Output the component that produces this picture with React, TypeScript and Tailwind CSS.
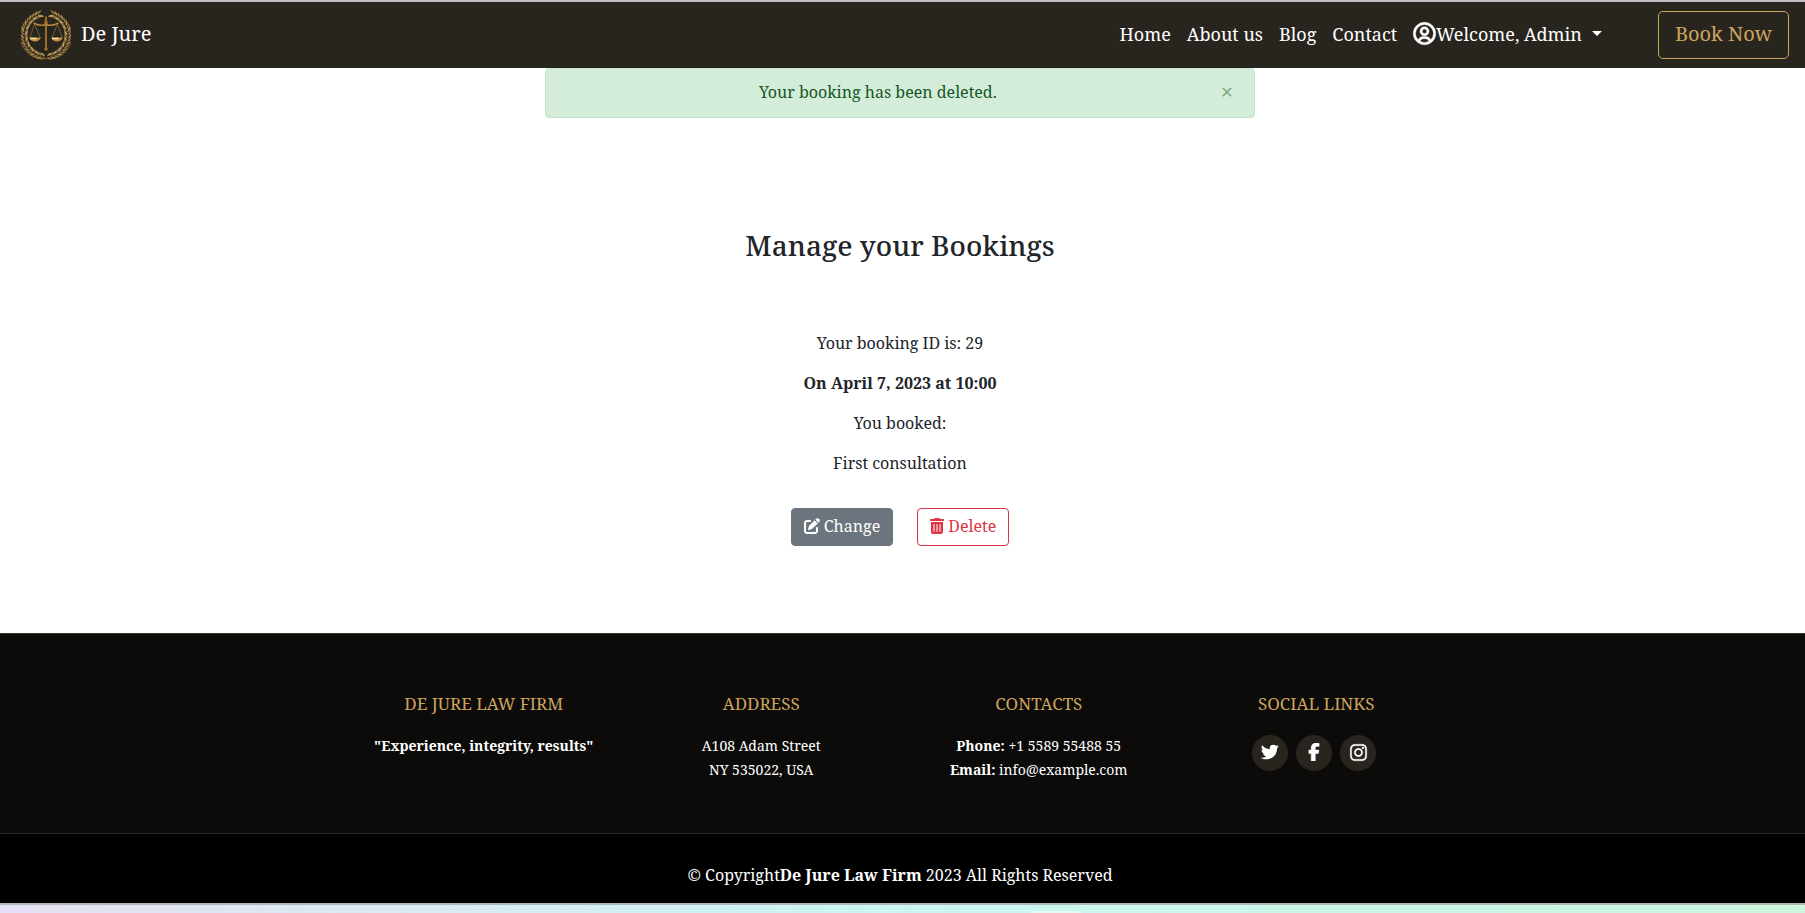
import type { ReactNode } from "react";
import { BiLogoTwitter, BiUserCircle } from "react-icons/bi";
import { FaFacebookF, FaInstagram, FaPenToSquare, FaTrashCan } from "react-icons/fa6";

const leaves = Array.from({ length: 19 }, (_, i) => 4 + i * 8.6);

function Wreath({ flip }: { flip?: boolean }) {
  return (
    <g transform={flip ? "translate(100 0) scale(-1 1)" : undefined}>
      <path d="M52 97 A 44 44 0 0 1 36 7" fill="none" stroke="#7a5f2b" strokeWidth="2" />
      {leaves.map((a, i) => (
        <g key={a} transform={`rotate(${a} 50 50)`}>
          <path d="M51 94 q-6 0 -11 5.500 q8 1.500 11 -5.500z" fill={i % 2 ? "#b39254" : "#94743a"} />
          <path d="M51 93 q-6 0 -11 -6.500 q8 -1.500 11 6.500z" fill={i % 2 ? "#8d6f38" : "#bd9c5c"} />
        </g>
      ))}
    </g>
  );
}

function Logo() {
  return (
    <svg viewBox="0 0 100 100" className="h-[50px] w-[50px]">
      <Wreath />
      <Wreath flip />
      <path d="M48 13 h4 v7 l2 6 -2 3 v46 l2 4 -4 3 -4 -3 2 -4 v-46 l-2 -3 2 -6z" fill="#9c6d22" />
      <path d="M27 27 q12 6 23 2 q11 4 23 -2" fill="none" stroke="#b08438" strokeWidth="2.8" />
      <circle cx="27" cy="27" r="2.2" fill="#b89048" />
      <circle cx="73" cy="27" r="2.2" fill="#b89048" />
      <path d="M27 28 L18 55 M27 28 L38 55 M73 28 L62 55 M73 28 L82 55" fill="none" stroke="#7d6330" strokeWidth="1.7" />
      <path d="M16 55 h24 q-4 8 -12 8 t-12 -8z M60 55 h24 q-4 8 -12 8 t-12 -8z" fill="#c08f3c" />
      <path d="M18 57 h13 M62 57 h13" stroke="#f0dfb0" strokeWidth="2.6" />
    </svg>
  );
}

function FooterColumn({ title, children }: { title: string; children: ReactNode }) {
  return (
    <div className="flex flex-col items-center text-center">
      <h4 className="mb-5 text-[17px] leading-5 text-[#cda45e] uppercase">{title}</h4>
      {children}
    </div>
  );
}

function SocialLink({ children }: { children: ReactNode }) {
  return (
    <a className="flex h-9 w-9 items-center justify-center rounded-full bg-[#28251f] pb-[2px] text-white">
      {children}
    </a>
  );
}

export default function App() {
  return (
    <div className="flex h-[913px] w-full flex-col overflow-hidden bg-white font-['Noto_Serif','DejaVu_Serif',serif] text-base text-[#212529]">
      <header className="flex h-[68px] shrink-0 items-center border-t-2 border-[#bfbfbf] bg-[#28251f] pr-4 pl-[21px] text-white">
        <a className="flex items-center gap-[10px]">
          <Logo />
          <span className="mb-[2px] text-[20px] leading-[30px]">De Jure</span>
        </a>
        <nav className="mb-[2px] ml-auto flex items-center gap-4 text-[18px] leading-[27px]">
          <a>Home</a>
          <a>About us</a>
          <a>Blog</a>
          <a>Contact</a>
          <a className="flex items-center">
            <BiUserCircle className="-mt-[2px] mr-[-2px] -ml-[2px] h-[27px] w-[27px] stroke-current stroke-[0.4]" />
            <span>Welcome, Admin</span>
            <span className="mb-[1px] ml-[10px] border-x-[5px] border-t-[5px] border-x-transparent border-t-white" />
          </a>
        </nav>
        <a className="ml-14 rounded-[5px] border border-[#cda45e] px-4 pt-[7px] pb-[9px] text-[20px] leading-[30px] text-[#cda45e]">
          Book Now
        </a>
      </header>

      <main className="flex h-[565px] w-[1800px] shrink-0 flex-col items-center text-center">
        <div className="flex h-[50px] w-[710px] items-center rounded border border-[#c3e6cb] bg-[#d4edda] pr-[21px] pb-[2px] pl-5 text-[#155724]">
          <span className="grow pr-[31px]">Your booking has been deleted.</span>
          <span className="mb-[2px] text-[22px] leading-6 text-[#74a17f]">×</span>
        </div>
        <h2 className="mt-[110px] text-[28px] leading-[34px] font-[470]">Manage your Bookings</h2>
        <p className="mt-[69px] leading-6">Your booking ID is: 29</p>
        <p className="mt-4 leading-6 font-bold">On April 7, 2023 at 10:00</p>
        <p className="mt-4 leading-6">You booked:</p>
        <p className="mt-4 leading-6">First consultation</p>
        <div className="mt-[33px] flex gap-6">
          <button className="flex h-[38px] items-center gap-1 rounded border border-[#6c757d] bg-[#6c757d] px-3 pb-[2px] text-white">
            <FaPenToSquare className="h-4 w-4" />
            Change
          </button>
          <button className="flex h-[38px] items-center gap-1 rounded border border-[#dc3545] px-3 pb-[2px] text-[#dc3545]">
            <FaTrashCan className="h-4 w-[14px]" />
            Delete
          </button>
        </div>
      </main>

      <footer className="flex shrink-0 flex-col text-white">
        <div className="h-[200px] border-t border-[#37332a] bg-[#0c0b09] pt-[60px]">
          <div className="ml-[345px] grid w-[1110px] grid-cols-4 text-[14px] leading-6">
            <FooterColumn title="De Jure Law Firm">
              <p className="font-bold">"Experience, integrity, results"</p>
            </FooterColumn>
            <FooterColumn title="Address">
              <p>
                A108 Adam Street
                <br />
                NY 535022, USA
              </p>
            </FooterColumn>
            <FooterColumn title="Contacts">
              <p>
                <b>Phone:</b> +1 5589 55488 55
                <br />
                <b>Email:</b> info@example.com
              </p>
            </FooterColumn>
            <FooterColumn title="Social Links">
              <div className="mt-[1px] mr-1 flex gap-2">
                <SocialLink><BiLogoTwitter className="h-[22px] w-[22px]" /></SocialLink>
                <SocialLink><FaFacebookF className="h-[18px] w-[18px] stroke-current stroke-[14]" /></SocialLink>
                <SocialLink><FaInstagram className="h-[19px] w-[19px] stroke-current stroke-[8]" /></SocialLink>
              </div>
            </FooterColumn>
          </div>
        </div>
        <div className="h-[70px] border-t border-[#28251f] bg-black pt-[29px]">
          <p className="w-[1800px] text-center leading-6">
            © Copyright<b>De Jure Law Firm</b> 2023 All Rights Reserved
          </p>
        </div>
      </footer>

      <div className="flex h-[10px] shrink-0 items-end overflow-hidden border-t-2 border-[#abb9b9] bg-linear-to-r from-[#e6e0f5] via-[#c9f6f3] to-[#cdf7de] pl-[1031px]">
        <div className="h-[2px] w-[50px] rounded-t-sm bg-[#e4faf0]" />
      </div>
    </div>
  );
}
